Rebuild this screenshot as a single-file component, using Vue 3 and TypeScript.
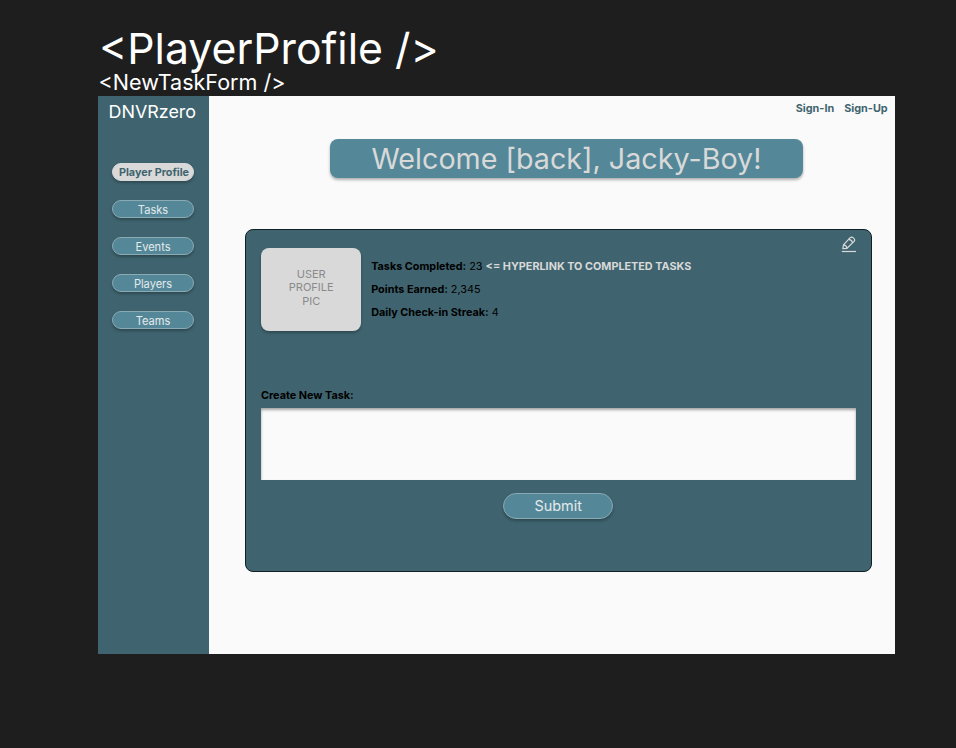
<script setup lang="ts">
interface NavItem {
  label: string
  active?: boolean
}

interface Stat {
  label: string
  value: string
  link?: string
}

const navItems: NavItem[] = [
  { label: 'Player Profile', active: true },
  { label: 'Tasks' },
  { label: 'Events' },
  { label: 'Players' },
  { label: 'Teams' },
]

const stats: Stat[] = [
  { label: 'Tasks Completed:', value: '23', link: '<= HYPERLINK TO COMPLETED TASKS' },
  { label: 'Points Earned:', value: '2,345' },
  { label: 'Daily Check-in Streak:', value: '4' },
]
</script>

<template>
  <div class="canvas">
    <h1 class="title">&lt;PlayerProfile /&gt;</h1>
    <h2 class="subtitle">&lt;NewTaskForm /&gt;</h2>
    <div class="frame">
      <aside class="sidebar">
        <div class="brand">DNVRzero</div>
        <nav class="nav">
          <a v-for="item in navItems" :key="item.label" class="pill" :class="{ active: item.active }">{{ item.label }}</a>
        </nav>
      </aside>
      <main class="main">
        <div class="auth"><a>Sign-In</a><a>Sign-Up</a></div>
        <div class="welcome">Welcome [back], Jacky-Boy!</div>
        <section class="card">
          <div class="profile">
            <div class="avatar">USER<br />PROFILE<br />PIC</div>
            <div class="stats">
              <div v-for="stat in stats" :key="stat.label" class="stat">
                <b>{{ stat.label }}</b> {{ stat.value }} <b v-if="stat.link" class="link">{{ stat.link }}</b>
              </div>
            </div>
            <svg class="edit" width="16" height="18" viewBox="0 0 16 18" fill="none" stroke="#d9d9d9" stroke-width="1.2" stroke-linejoin="round">
              <path d="M1.9 12.6 2.5 8.9 9.2 1.7Q10.8 0.5 12.4 1.9 14.4 3.5 13.1 5.4L6 12.3Z" />
              <path d="M2.5 8.9Q5.3 9.2 6 12.3M7.8 3.3Q11 3.7 11.6 6.8" />
              <path d="M.8 15.5H15" />
            </svg>
          </div>
          <label class="label" for="task">Create New Task:</label>
          <textarea id="task" class="field"></textarea>
          <button class="submit" type="button">Submit</button>
        </section>
      </main>
    </div>
  </div>
</template>

<style>
body {
  background: #1e1e1e;
}
</style>

<style scoped>
.canvas {
  box-sizing: border-box;
  width: 956px;
  height: 748px;
  padding: 21.7px 61px 0 98px;
  background: #1e1e1e;
  color: #fff;
  font-family: Inter, sans-serif;
  overflow: hidden;
}
.title {
  margin: 0 0 0 1px;
  height: 50px;
  font-size: 42.75px;
  line-height: 53px;
  font-weight: 400;
  white-space: nowrap;
}
.subtitle {
  margin: 0 0 0 0.5px;
  height: 24px;
  font-size: 21.55px;
  line-height: 21px;
  font-weight: 400;
}
.frame {
  display: flex;
  width: 797px;
  height: 558px;
  background: #fafafa;
}
.sidebar {
  display: flex;
  flex-direction: column;
  align-items: center;
  width: 110.6px;
  background: #3f646f;
}
.brand {
  margin: 5px 0 0 -2px;
  height: 22px;
  font-size: 17.9px;
  line-height: 22px;
}
.nav {
  display: flex;
  flex-direction: column;
  gap: 18.7px;
  margin: 40px 0 0 -0.6px;
}
.pill {
  box-sizing: border-box;
  width: 82px;
  height: 18.4px;
  border: 1px solid #8aaab4;
  border-radius: 10px;
  background: #548898;
  box-shadow: 0 2px 3px rgba(0, 0, 0, 0.28);
  color: #e4eaec;
  font-size: 11.07px;
  line-height: 18.4px;
  text-align: center;
  white-space: nowrap;
}
.pill.active {
  padding-left: 2px;
  background: #d9d9d9;
  border-color: #d9d9d9;
  color: #3f646f;
  font-size: 10.8px;
  line-height: 17.4px;
  font-weight: 700;
}
.main {
  flex: 1;
  display: flex;
  flex-direction: column;
}
.auth {
  box-sizing: border-box;
  display: flex;
  justify-content: flex-end;
  gap: 10px;
  padding: 5.4px 7.3px 0 0;
  height: 43.5px;
  color: #3f646f;
  font-size: 10.85px;
  line-height: 14px;
  font-weight: 700;
}
.welcome {
  margin-left: 121.4px;
  width: 473px;
  height: 39px;
  border-radius: 8px;
  background: #548898;
  box-shadow: 0 2px 3px rgba(0, 0, 0, 0.3);
  color: #d9d9d9;
  font-size: 28.7px;
  line-height: 39px;
  font-weight: 400;
  text-align: center;
}
.card {
  box-sizing: border-box;
  display: flex;
  flex-direction: column;
  margin: 51px 0 0 36.4px;
  width: 627.4px;
  height: 343px;
  padding: 18px 15px 0;
  border: 1px solid #0f2025;
  border-radius: 8px;
  background: #3f646f;
  color: #000;
  font-size: 10.82px;
}
.profile {
  display: flex;
  height: 140px;
}
.avatar {
  box-sizing: border-box;
  width: 100.4px;
  height: 83px;
  padding-top: 19.4px;
  border-radius: 8px;
  background: #d9d9d9;
  box-shadow: 0 2px 3px rgba(0, 0, 0, 0.28);
  color: #8a8a8a;
  font-size: 11px;
  line-height: 13.6px;
  text-align: center;
}
.stats {
  padding: 8px 0 0 9.8px;
}
.stat {
  height: 22.8px;
  line-height: 22.8px;
  white-space: nowrap;
}
.link {
  color: #d9d9d9;
}
.edit {
  margin: -12.5px -1px 0 auto;
}
.label {
  height: 19.7px;
  line-height: 15.4px;
  font-weight: 700;
}
.field {
  box-sizing: border-box;
  display: block;
  width: 595px;
  height: 72px;
  border: 0;
  outline: 0;
  resize: none;
  background: #fafafa;
  box-shadow: inset 0 2px 3px rgba(0, 0, 0, 0.35);
}
.submit {
  box-sizing: border-box;
  align-self: center;
  margin: 13px 1px 0 0;
  width: 110px;
  height: 26px;
  padding: 0;
  border: 1px solid #89a9b4;
  border-radius: 13px;
  background: #548898;
  box-shadow: 0 2px 3px rgba(0, 0, 0, 0.28);
  color: #e4eaec;
  font: 400 14.4px/24px Inter, sans-serif;
}
</style>
